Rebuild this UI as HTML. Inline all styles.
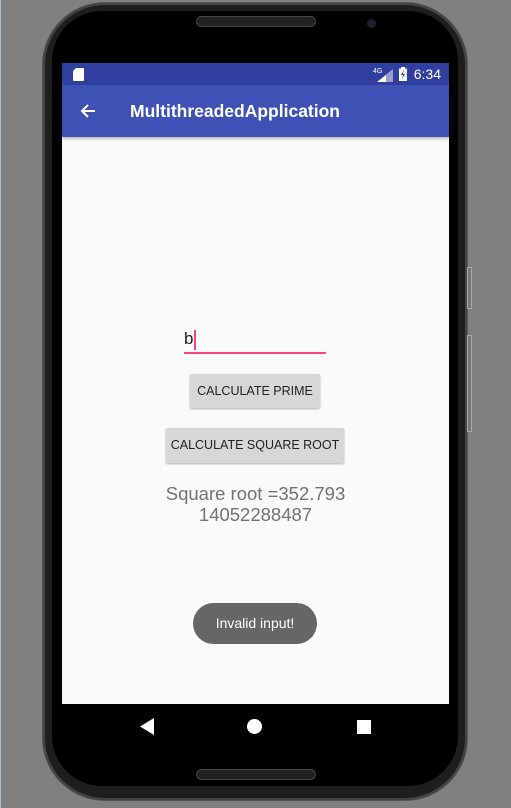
<!DOCTYPE html>
<html><head><meta charset="utf-8">
<style>
html,body{margin:0;padding:0;width:511px;height:808px;overflow:hidden;background:#808080;font-family:"Liberation Sans",sans-serif;}
.edge{position:absolute;left:0;top:0;width:1px;height:808px;background:#a8c0e0;}
.phone{position:absolute;left:43px;top:3px;width:424px;height:797px;border-radius:62px;background:#1e1e1e;box-shadow:0 0 0 1px #555, inset 0 0 0 2px #444;}
.inner{position:absolute;left:52px;top:11px;width:406px;height:775px;border-radius:50px;background:#000;}
.grill{position:absolute;left:196px;width:120px;height:11px;border-radius:6px;background:#222;border:1px solid #444;box-sizing:border-box;}
.cam{position:absolute;left:367px;top:19px;width:9px;height:9px;border-radius:50%;background:#1b2030;}
.screen{position:absolute;left:62px;top:63px;width:387px;height:641px;background:#fafafa;overflow:hidden;}
.status{position:absolute;left:0;top:0;width:387px;height:22px;background:#303f9f;}
.appbar{position:absolute;left:0;top:22px;width:387px;height:52px;background:#3f51b5;box-shadow:0 2px 3px rgba(0,0,0,.25);}
.title{position:absolute;left:68px;top:16px;color:#fff;font-size:17.5px;font-weight:bold;}
.time{position:absolute;right:8px;top:3px;color:#fff;font-size:14px;}
.nav{position:absolute;left:62px;top:704px;width:387px;height:46px;background:#000;}
.edit{position:absolute;left:122px;top:265px;width:142px;height:24px;border-bottom:2px solid #ff4081;}
.btn{position:absolute;background:#d6d7d7;border-radius:2px;box-shadow:0 1px 2px rgba(0,0,0,.3);font-size:12.5px;color:#222;text-align:center;}
.res{position:absolute;left:0;width:387px;text-align:center;color:#737373;font-size:18.5px;line-height:21px;}
.toast{position:absolute;left:131px;top:540px;width:124px;height:41px;border-radius:21px;background:#666;color:#fff;font-size:14px;text-align:center;line-height:41px;}
.sb{position:absolute;left:425px;width:3px;background:#777;border:1px solid #aaa;}
</style></head><body>
<div class="edge"></div>
<div class="phone"></div>
<div class="sb" style="top:267px;height:40px;left:467px"></div>
<div class="sb" style="top:335px;height:95px;left:467px"></div>
<div class="inner"></div>
<div class="grill" style="top:16px"></div>
<div class="grill" style="top:769px"></div>
<div class="cam"></div>
<div class="screen">
  <div class="status">
    <svg style="position:absolute;left:11px;top:5px" width="11" height="13"><path d="M3 0H10a1 1 0 0 1 1 1V12a1 1 0 0 1-1 1H1a1 1 0 0 1-1-1V3Z" fill="#fff"/></svg>
    <svg style="position:absolute;left:311px;top:3px" width="22" height="16"><text x="0" y="7" font-size="7" fill="#fff" font-family="Liberation Sans">4G</text><path d="M4 16L20 3V16Z" fill="#fff" opacity=".5"/><path d="M4 16L13 9V16Z" fill="#fff"/></svg>
    <svg style="position:absolute;left:337px;top:4px" width="8" height="14"><path d="M2 0H6V1.5H8V14H0V1.5H2Z" fill="#fff"/><path d="M5 3L2 8H4L3 12L6 7H4Z" fill="#303f9f"/></svg>
    <div class="time">6:34</div>
  </div>
  <div class="appbar">
    <svg style="position:absolute;left:18px;top:18px" width="16" height="16"><path d="M15 8H2M8 2L2 8L8 14" stroke="#fff" stroke-width="2" fill="none"/></svg>
    <div class="title">MultithreadedApplication</div>
  </div>
  <div class="edit"><span style="position:absolute;left:0;top:1px;font-size:17px;color:#222">b</span><span style="position:absolute;left:10px;top:2px;width:2px;height:20px;background:#ff4081"></span></div>
  <div class="btn" style="left:128px;top:311px;width:130px;height:34px;line-height:34px">CALCULATE PRIME</div>
  <div class="btn" style="left:104px;top:365px;width:178px;height:35px;line-height:35px">CALCULATE SQUARE ROOT</div>
  <div class="res" style="top:420px">Square root =352.793<br>14052288487</div>
  <div class="toast">Invalid input!</div>
</div>
<div class="nav">
  <svg style="position:absolute;left:78px;top:14px" width="14" height="17"><path d="M14 0V17L0 8.5Z" fill="#fff"/></svg>
  <svg style="position:absolute;left:185px;top:15px" width="15" height="15"><circle cx="7.5" cy="7.5" r="7.5" fill="#fff"/></svg>
  <div style="position:absolute;left:295px;top:16px;width:14px;height:14px;background:#fff"></div>
</div>
</body></html>
